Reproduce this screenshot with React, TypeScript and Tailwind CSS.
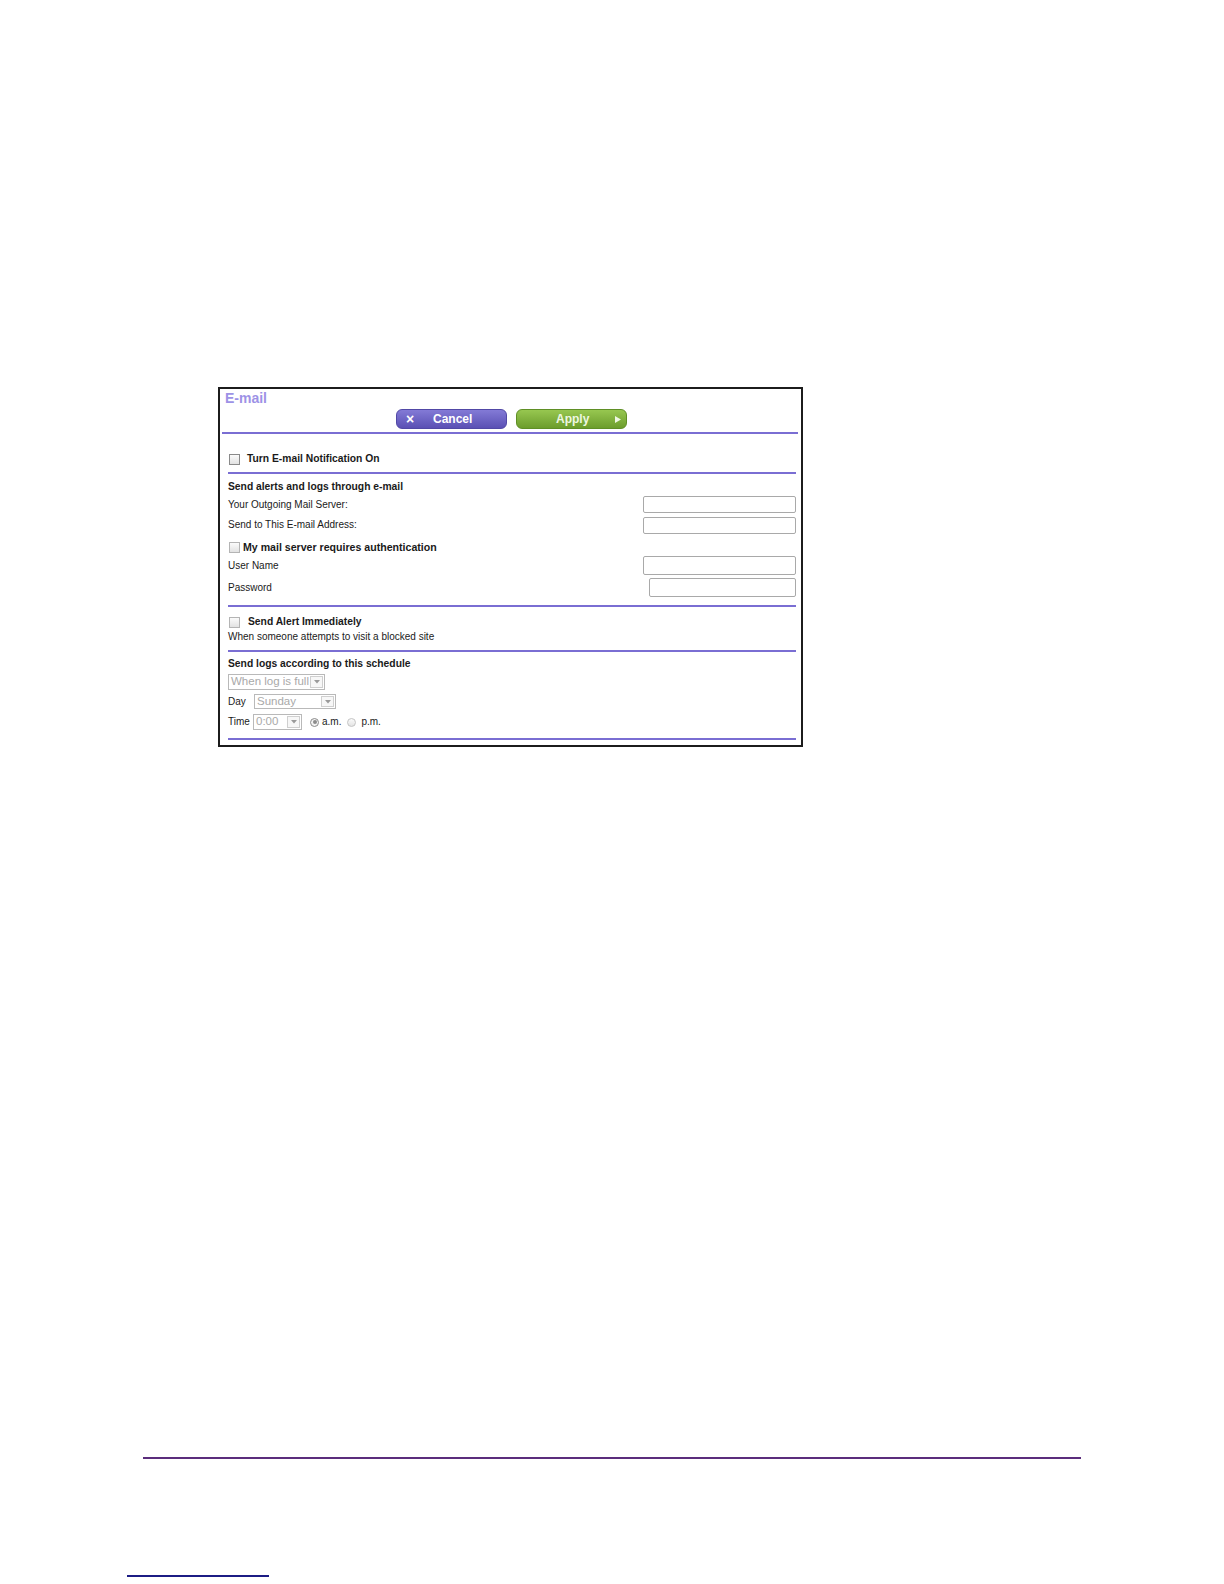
import React from "react";

function Check({ dark }: { dark?: boolean }) {
  return (
    <span
      className={
        "block w-[11px] h-[11px] shrink-0 border bg-linear-to-b from-[#fbfbfb] to-[#e2e2e2] " +
        (dark ? "border-[#8a8a8a]" : "border-[#b4b4b4]")
      }
    />
  );
}

function Input({ w, h }: { w: string; h: string }) {
  return <span className={"block shrink-0 border border-[#a9a9a9] rounded-[2px] bg-white " + w + " " + h} />;
}

function Arrow() {
  return (
    <span className="flex items-center justify-center w-[13px] shrink-0 self-stretch m-[1px] border border-[#cfcfcf] bg-[#f7f7f7]">
      <svg width="6" height="4" viewBox="0 0 6 4">
        <path d="M0 0 L6 0 L3 3.5 Z" fill="#9a9a9a" />
      </svg>
    </span>
  );
}

function Select({ w, h, text }: { w: string; h: string; text: string }) {
  return (
    <span className={"flex shrink-0 border border-[#b9b9b9] bg-white " + w + " " + h}>
      <span className="flex-1 pl-[2px] text-[11.5px] leading-none text-[#a9a9a9] flex items-center overflow-hidden whitespace-nowrap">
        {text}
      </span>
      <Arrow />
    </span>
  );
}

function Line({ cls }: { cls?: string }) {
  return <div className={"h-[2px] bg-[#7a6ed3] " + (cls || "")} />;
}

export default function App() {
  return (
    <div className="w-[1224px] h-[1584px] bg-white font-['Liberation_Sans',Arial,sans-serif] text-[#1a1a1a] overflow-hidden">
      <div className="pt-[387px] pl-[218px]">
        <div className="w-[585px] h-[360px] border-2 border-[#1c1c1c] flex flex-col">
          <div className="mt-[1px] pl-[5px] h-[16px] text-[14px] leading-[16px] font-bold text-[#9d92e6]">
            E-mail
          </div>
          <div className="mt-[3px] h-[20px] flex pl-[176px] gap-[9px]">
            <div className="w-[111px] h-[20px] rounded-[6px] border border-[#5148a6] bg-linear-to-b from-[#837ad6] to-[#5b50b4] flex items-center pl-[9px] text-white font-bold text-[12px] leading-none">
              <span className="w-[27px] text-[14px]">×</span>
              <span>Cancel</span>
            </div>
            <div className="w-[111px] h-[20px] rounded-[6px] border border-[#5f8f25] bg-linear-to-b from-[#97c750] to-[#6c9d2c] flex items-center pl-[39px] text-[#eef7e2] font-bold text-[12px] leading-none">
              <span className="w-[32px]">Apply</span>
              <svg className="ml-[27px]" width="6" height="7" viewBox="0 0 6 7">
                <path d="M0 0 L6 3.5 L0 7 Z" fill="#eef7e2" />
              </svg>
            </div>
          </div>
          <Line cls="mt-[3px] ml-[2px] mr-[3px]" />
          <div className="mt-[16px] h-[18px] flex items-center pl-[9px]">
            <Check dark />
            <span className="ml-[7px] text-[10.3px] font-bold leading-none">Turn E-mail Notification On</span>
          </div>
          <div className="pl-[8px] pr-[5px] flex flex-col">
            <Line cls="mt-[4px]" />
            <div className="mt-[6px] h-[14px] flex items-center text-[10.3px] font-bold leading-none">
              Send alerts and logs through e-mail
            </div>
            <div className="mt-[2px] h-[17px] flex items-center justify-between text-[10px] leading-none">
              <span>Your Outgoing Mail Server:</span>
              <Input w="w-[153px]" h="h-[17px]" />
            </div>
            <div className="mt-[4px] h-[17px] flex items-center justify-between text-[10px] leading-none">
              <span className="-mt-[2px]">Send to This E-mail Address:</span>
              <Input w="w-[153px]" h="h-[17px]" />
            </div>
            <div className="mt-[6px] h-[14px] flex items-center">
              <span className="ml-[1px]">
                <Check />
              </span>
              <span className="ml-[3px] text-[10.6px] font-bold leading-none">My mail server requires authentication</span>
            </div>
            <div className="mt-[2px] h-[19px] flex items-center justify-between text-[10px] leading-none">
              <span>User Name</span>
              <Input w="w-[153px]" h="h-[19px]" />
            </div>
            <div className="mt-[3px] h-[19px] flex items-center justify-between text-[10px] leading-none">
              <span>Password</span>
              <Input w="w-[147px]" h="h-[19px]" />
            </div>
            <Line cls="mt-[8px]" />
            <div className="mt-[8px] h-[14px] flex items-center">
              <span className="ml-[1px]">
                <Check />
              </span>
              <span className="ml-[8px] text-[10.3px] font-bold leading-none">Send Alert Immediately</span>
            </div>
            <div className="mt-[1px] h-[14px] flex items-center text-[10px] leading-none">
              When someone attempts to visit a blocked site
            </div>
            <Line cls="mt-[6px]" />
            <div className="mt-[5px] h-[14px] flex items-center text-[10.3px] font-bold leading-none">
              Send logs according to this schedule
            </div>
            <div className="mt-[3px] flex">
              <Select w="w-[97px]" h="h-[16px]" text="When log is full" />
            </div>
            <div className="mt-[4px] h-[15px] flex items-center text-[10px] leading-none">
              <span className="w-[26px]">Day</span>
              <Select w="w-[82px]" h="h-[15px]" text="Sunday" />
            </div>
            <div className="mt-[5px] h-[16px] flex items-center text-[10px] leading-none">
              <span className="w-[25px]">Time</span>
              <Select w="w-[49px]" h="h-[16px]" text="0:00" />
              <span className="ml-[8px] w-[9px] h-[9px] rounded-full border border-[#8c8c8c] bg-[#f2f2f2] flex items-center justify-center">
                <span className="block w-[4px] h-[4px] rounded-full bg-[#8c8c8c]" />
              </span>
              <span className="ml-[3px]">a.m.</span>
              <span className="ml-[6px] w-[9px] h-[9px] rounded-full border border-[#c4c4c4] bg-linear-to-b from-[#fafafa] to-[#e4e4e4]" />
              <span className="ml-[5px]">p.m.</span>
            </div>
            <Line cls="mt-[8px]" />
          </div>
        </div>
      </div>
      <div className="mt-[710px] ml-[143px] w-[938px] h-[2px] bg-[#5b2d7c]" />
      <div className="mt-[116px] ml-[127px] w-[142px] h-[2px] bg-[#1c1c84]" />
    </div>
  );
}
